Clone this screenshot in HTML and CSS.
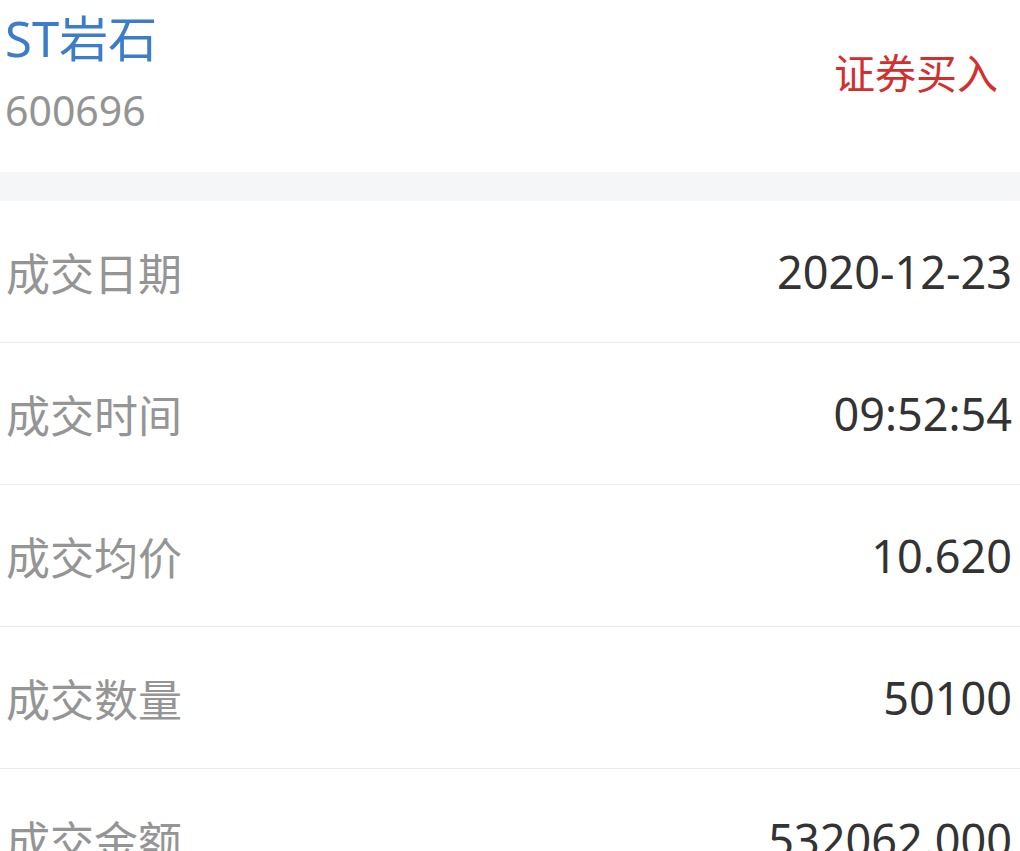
FILE: index.html
```html
<!DOCTYPE html>
<html lang="zh-CN">
<head>
    <meta charset="UTF-8">
    <meta name="viewport" content="width=device-width, initial-scale=1.0">
    <title>成交详情</title>
    <link rel="stylesheet" href="styles.css">
</head>
<body>
    <div class="header">
        <div class="stock">
            <div class="stock-name">ST岩石</div>
            <div class="stock-code">600696</div>
        </div>
        <div class="trade-type">证券买入</div>
    </div>

    <div class="band"></div>

    <div class="list">
        <div class="row">
            <span class="label">成交日期</span>
            <span class="value">2020-12-23</span>
        </div>
        <div class="row">
            <span class="label">成交时间</span>
            <span class="value">09:52:54</span>
        </div>
        <div class="row">
            <span class="label">成交均价</span>
            <span class="value">10.620</span>
        </div>
        <div class="row">
            <span class="label">成交数量</span>
            <span class="value">50100</span>
        </div>
        <div class="row">
            <span class="label">成交金额</span>
            <span class="value">532062.000</span>
        </div>
    </div>
</body>
</html>
```

FILE: styles.css
```css
body {
    margin: 0;
    background-color: #fff;
    font-family: "Noto Sans", "Noto Sans CJK SC", sans-serif;
    overflow: hidden;
}

.header {
    height: 172px;
    display: flex;
    justify-content: space-between;
    align-items: center;
    padding: 0 22px 0 5px;
    box-sizing: border-box;
}

.stock {
    display: flex;
    flex-direction: column;
    margin-top: -24px;
}

.stock-name {
    color: #3c7dca;
    font-size: 49px;
    line-height: 60px;
    margin-top: -4px;
}

.stock-code {
    color: #949494;
    font-size: 41px;
    line-height: 52px;
    margin-top: 16px;
}

.trade-type {
    color: #d1302e;
    font-size: 41px;
    line-height: 50px;
    margin-top: -26px;
}

.band {
    height: 29px;
    background-color: #f5f6f8;
}

.row {
    height: 141px;
    display: flex;
    justify-content: space-between;
    align-items: center;
    padding: 0 8px 0 6px;
    border-bottom: 1px solid #ebebeb;
}

.label {
    color: #959595;
    font-size: 44px;
}

.value {
    color: #333;
    font-size: 45px;
}
```
